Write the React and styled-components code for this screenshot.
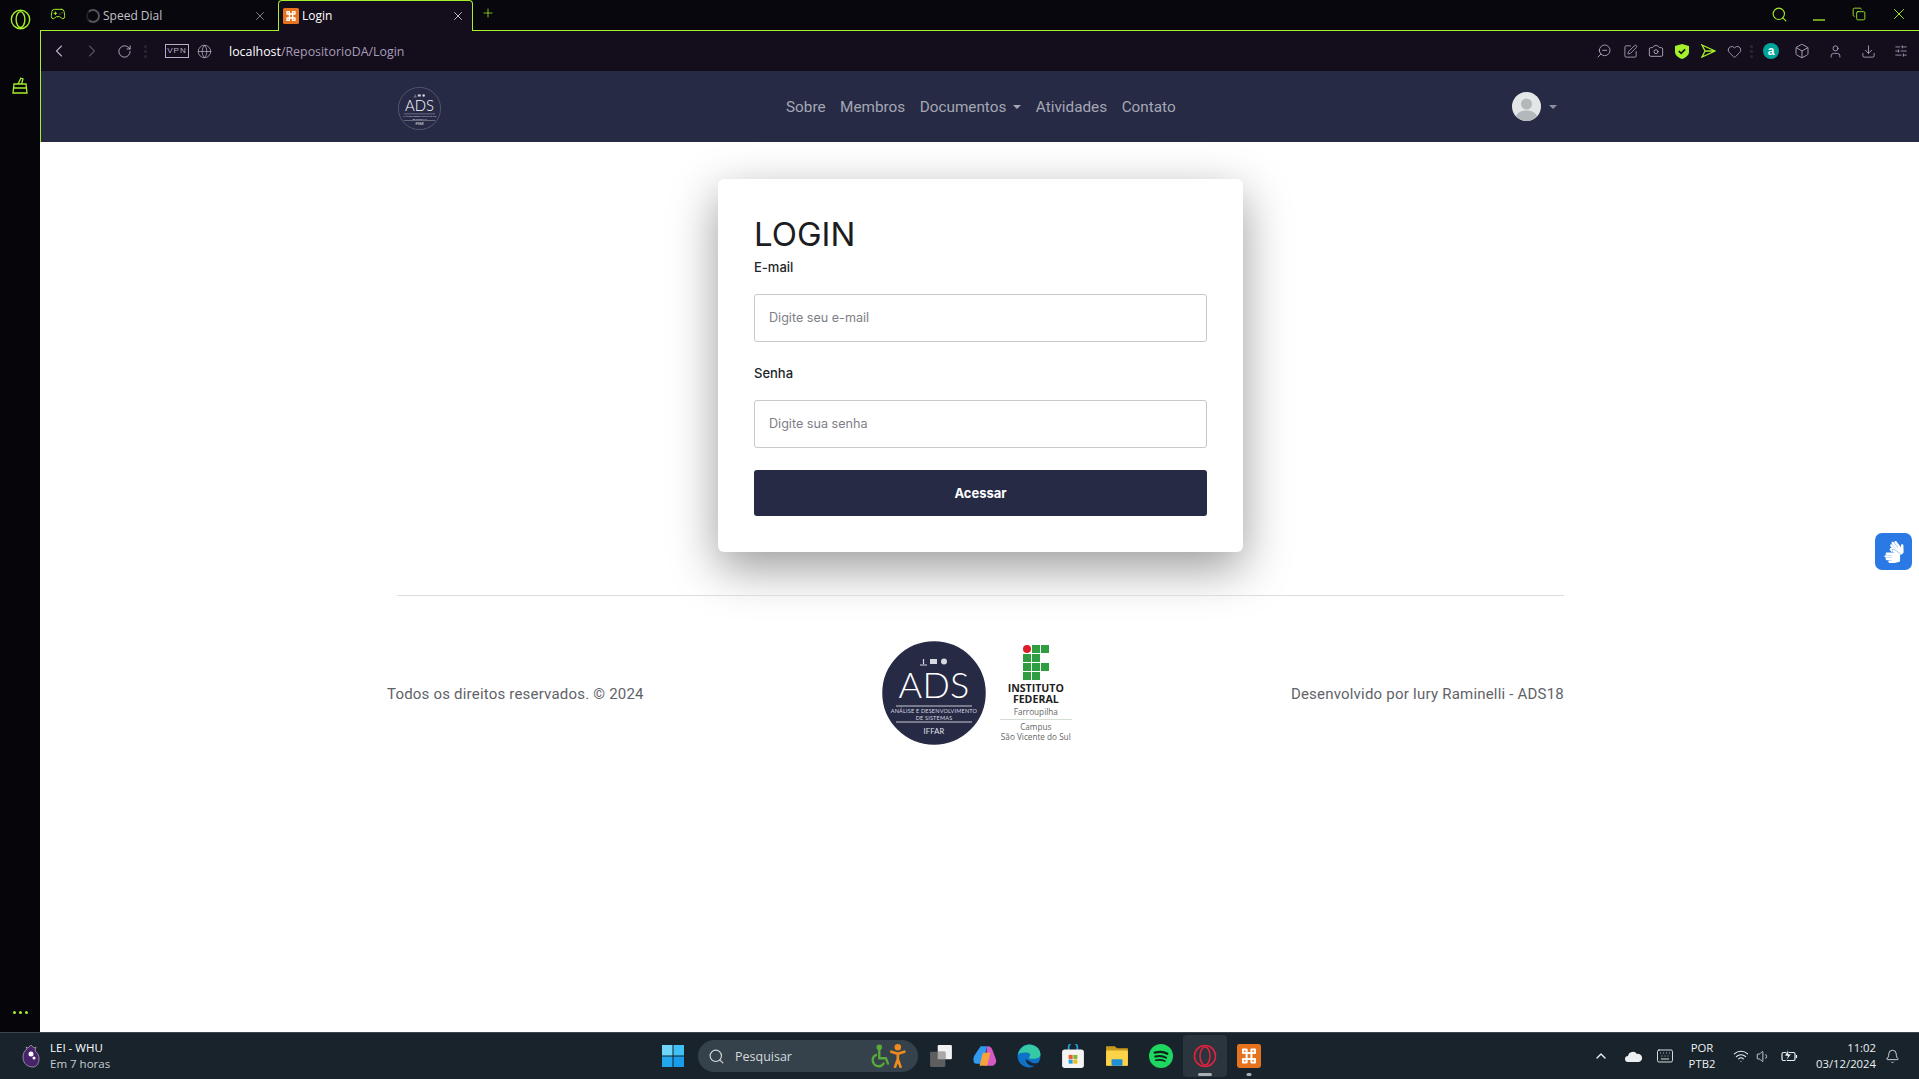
import React from 'react';
import styled, {createGlobalStyle} from 'styled-components';
import {FaSignLanguage} from 'react-icons/fa';
import {
    ChevronLeft, ChevronRight, RotateCw, Globe, ZoomOut, SquarePen, Camera, Heart, Box, User, Download,
    SlidersHorizontal, Search, Copy, X, Plus, Gamepad2, Bell, Wifi, Volume1, ChevronUp, Keyboard
} from 'lucide-react';

const GREEN = '#a4f02a';
const NAVY = '#262a45';
const LILAC = '#b9aec9';

const GlobalStyle = createGlobalStyle`
    html, body { margin: 0; padding: 0; height: 100%; background: #fff; overflow: hidden; }
    * { box-sizing: border-box; }
    #root { height: 1079px; font-family: Inter, "Liberation Sans", sans-serif; }
`;

const Screen = styled.div`
    position: relative;
    height: 1079px;
    display: flex;
    flex-direction: column;
`;

const Desktop = styled.div`
    flex: 1;
    min-height: 0;
    display: flex;
`;

const SideBar = styled.aside`
    width: 40px;
    background: #060509;
    display: flex;
    flex-direction: column;
    align-items: center;
    color: ${GREEN};
    padding: 9px 0 18px;
`;

const SideBasket = styled.div`
    margin-top: 44px;
    height: 22px;
    display: flex;
    align-items: center;
`;

const SideDots = styled.div`
    margin-top: auto;
    display: flex;
    gap: 3px;
`;

const Dot = styled.span`
    width: 3px;
    height: 3px;
    border-radius: 50%;
    background: ${p => p.$color || GREEN};
`;

const Browser = styled.div`
    flex: 1;
    min-width: 0;
    display: flex;
    flex-direction: column;
`;

const TabStrip = styled.div`
    height: 31px;
    background: #08070d;
    border-bottom: 1px solid ${GREEN};
    display: flex;
    align-items: flex-start;
    padding-left: 10px;
`;

const WorkspaceIcon = styled.div`
    width: 25px;
    height: 30px;
    display: flex;
    align-items: center;
    color: ${GREEN};
    padding-bottom: 2px;
`;

const Tab = styled.div`
    height: 31px;
    display: flex;
    align-items: center;
    font-size: 12px;
    width: ${p => p.$active ? '195px' : '203px'};
    padding: ${p => p.$active ? '0 5px 0 4px' : '0 11px 0 11px'};
    color: ${p => p.$active ? '#fff' : '#c4c0c9'};
    background: ${p => p.$active ? '#140d1c' : 'transparent'};
    border: ${p => p.$active ? `1px solid ${GREEN}` : 'none'};
    border-bottom: none;
    border-radius: 4px 4px 0 0;
    margin-bottom: -1px;
    position: relative;
    font-family: "Open Sans", sans-serif;
`;

const TabTitle = styled.span`
    flex: 1;
    margin-left: 3px;
    padding-bottom: 1px;
`;

const Spinner = styled.span`
    width: 14px;
    height: 14px;
    border-radius: 50%;
    border: 2px solid #55525c;
    border-left-color: #22202a;
`;

const TabClose = styled.span`
    display: flex;
    color: ${p => p.$active ? '#eee' : '#a8a4ae'};
    margin-right: ${p => p.$active ? '2px' : '0'};
`;

const NewTab = styled.div`
    display: flex;
    margin: 6px 0 0 8px;
    color: ${GREEN};
`;

const WindowButtons = styled.div`
    margin-left: auto;
    display: flex;
    gap: 18px;
    padding: 5px 9px 0 0;
    color: ${GREEN};
`;

const WindowButton = styled.span`
    width: 22px;
    height: 18px;
    display: flex;
    align-items: center;
    justify-content: center;
`;

const AddressBar = styled.div`
    height: 40px;
    background: #140d1c;
    border-left: 1px solid ${GREEN};
    display: flex;
    align-items: center;
    color: ${LILAC};
    padding-left: 1px;
`;

const ToolButton = styled.span`
    width: ${p => p.$w || 33}px;
    display: flex;
    justify-content: center;
    align-items: center;
    color: ${p => p.$color || LILAC};
`;

const ToolDots = styled.span`
    display: flex;
    flex-direction: column;
    gap: 2px;
    width: ${p => p.$w || 8}px;
    align-items: center;
`;

const Vpn = styled.span`
    width: 24px;
    height: 14px;
    border: 1px solid ${LILAC};
    font: 8px/12px "Liberation Sans", sans-serif;
    letter-spacing: 1px;
    text-align: center;
    margin: 0 3px 0 16px;
`;

const Url = styled.div`
    margin-left: 13px;
    font-size: 12.4px;
    font-family: "Open Sans", sans-serif;
    color: #a79db8;
    strong { color: #fff; font-weight: 400; }
`;

const ToolRight = styled.div`
    margin-left: auto;
    display: flex;
    align-items: center;
`;

const Page = styled.main`
    flex: 1;
    min-height: 0;
    background: #fff;
`;

const NavBar = styled.nav`
    height: 71px;
    background: ${NAVY};
    border-left: 1px solid ${GREEN};
    display: flex;
    align-items: center;
    padding: 0 362px 0 357px;
`;

const NavLogo = styled.div`
    display: flex;
    margin-top: 3px;
`;

const NavLinks = styled.div`
    display: flex;
    gap: 14.5px;
    margin-left: 345px;
    font-family: Roboto, sans-serif;
    font-size: 15.3px;
    color: #a5a7b3;
`;

const NavLink = styled.span`
    display: flex;
    align-items: center;
`;

const Caret = styled.span`
    width: 0;
    height: 0;
    border-top: 4px solid ${p => p.$color || '#a5a7b3'};
    border-left: 4px solid transparent;
    border-right: 4px solid transparent;
    margin-left: ${p => p.$gap || 7}px;
`;

const NavUser = styled.div`
    margin-left: auto;
    display: flex;
    align-items: center;
`;

const Container = styled.div`
    width: 1187px;
    margin-left: 347px;
`;

const Card = styled.section`
    width: 525px;
    height: 373px;
    margin: 37px 0 0 331px;
    padding: 34px 36px;
    background: #fff;
    border-radius: 6px;
    box-shadow: 0 16px 48px rgba(0, 0, 0, 0.4);
`;

const Title = styled.h1`
    margin: 0 0 4px;
    font-size: 33px;
    line-height: 42px;
    font-weight: 400;
    color: #1b1d22;
`;

const Label = styled.label`
    display: block;
    font-size: 13px;
    line-height: 16px;
    font-weight: 500;
    color: #212529;
    margin-top: ${p => p.$top || 0}px;
    margin-bottom: 19px;
`;

const Input = styled.input`
    display: block;
    width: 100%;
    height: 48px;
    border: 1px solid #c9c9c9;
    border-radius: 3px;
    padding: 0 14px 2px;
    font: 12.6px Inter, sans-serif;
    outline: none;
    &::placeholder { color: #7d8186; opacity: 1; }
`;

const Submit = styled.button`
    display: block;
    width: 100%;
    height: 46px;
    margin-top: 22px;
    padding-bottom: 2px;
    border: none;
    border-radius: 3px;
    background: ${NAVY};
    color: #fff;
    font: 700 13px Inter, sans-serif;
`;

const Rule = styled.hr`
    margin: 43px 10px 0 10px;
    border: none;
    border-top: 1px solid #dcdcdc;
`;

const Footer = styled.footer`
    display: flex;
    align-items: center;
    justify-content: space-between;
    margin-top: 45px;
    height: 104px;
    font-family: Roboto, sans-serif;
    font-size: 15px;
    letter-spacing: 0.2px;
    color: #5f6368;
    padding-right: 10px;
    & > span { margin-top: 2px; }
`;

const FooterLogos = styled.div`
    display: flex;
    align-items: center;
    gap: 14px;
    margin-left: 19px;
`;

const Campus = styled.div`
    width: 72px;
    display: flex;
    flex-direction: column;
    align-items: center;
    letter-spacing: 0;
`;

const IfGrid = styled.div`
    display: grid;
    grid-template-columns: repeat(3, 8px);
    grid-auto-rows: 8px;
    gap: 1px;
    margin-bottom: 3px;
`;

const IfCell = styled.span`
    background: ${p => p.$red ? '#d8202a' : p.$empty ? 'transparent' : '#2f9e41'};
    border-radius: ${p => p.$red ? '50%' : '0'};
`;

const IfName = styled.div`
    font: 700 10.6px/11px "Open Sans", sans-serif;
    text-align: center;
    color: #222;
    margin-bottom: 2px;
`;

const IfCity = styled.div`
    font: 8.2px/10px "Open Sans", sans-serif;
    color: #666;
    text-align: center;
    width: 100%;
    border-bottom: ${p => p.$line ? '1px solid #d3dfd3' : 'none'};
    padding-bottom: ${p => p.$line ? '2px' : '0'};
    margin-bottom: ${p => p.$line ? '2px' : '0'};
    white-space: nowrap;
`;

const SignWidget = styled.div`
    position: absolute;
    left: 1875px;
    top: 533px;
    width: 37px;
    height: 37px;
    border-radius: 7px;
    background: #2a79e4;
    color: #fff;
    display: flex;
    align-items: center;
    justify-content: center;
`;

const TaskBar = styled.footer`
    height: 47px;
    background: #18232b;
    border-top: 1px solid #3c4549;
    display: flex;
    align-items: center;
    color: #fff;
    position: relative;
    font-family: "Open Sans", sans-serif;
`;

const Weather = styled.div`
    display: flex;
    align-items: center;
    gap: 10px;
    padding-left: 22px;
    width: 661px;
`;

const WeatherText = styled.div`
    font-size: 11.5px;
    line-height: 16px;
    span { display: block; color: #c8ced2; }
`;

const Pinned = styled.div`
    display: flex;
    align-items: center;
`;

const SearchPill = styled.div`
    width: 220px;
    height: 32px;
    margin: 0 1px 0 13px;
    border-radius: 16px;
    background: #35424b;
    display: flex;
    align-items: center;
    padding: 0 11px 0 10px;
    font-size: 12.5px;
    color: #d5d9dc;
    gap: 10px;
    span { flex: 1; }
`;

const PinnedIcon = styled.div`
    width: 44px;
    height: 42px;
    display: flex;
    align-items: center;
    justify-content: center;
    position: relative;
    border-radius: 4px;
    background: ${p => p.$active ? '#2a353d' : 'transparent'};
    svg { width: 24px; height: 24px; }
`;

const RunMark = styled.span`
    position: absolute;
    bottom: 1px;
    left: 50%;
    transform: translateX(-50%);
    width: ${p => p.$wide ? 14 : 5}px;
    height: 3px;
    border-radius: 2px;
    background: #aab0b4;
`;

const Tray = styled.div`
    margin-left: auto;
    display: flex;
    align-items: center;
    padding-right: 16px;
    font-size: 11.3px;
    color: #eef0f1;
`;

const TrayIcon = styled.span`
    width: ${p => p.$w || 26}px;
    display: flex;
    justify-content: center;
`;

const TrayLang = styled.div`
    width: 44px;
    text-align: center;
    line-height: 16px;
    margin: 0 6px 0 2px;
`;

const Clock = styled.div`
    width: 70px;
    text-align: right;
    line-height: 16px;
    margin: 0 5px 0 2px;
`;

const OperaMark = ({size, color}) => (
    <svg width={size} height={size} viewBox="0 0 24 24" fill="none" stroke={color} strokeWidth="1.6">
        <circle cx="12" cy="12" r="10.5"/>
        <ellipse cx="12" cy="12" rx="5" ry="9"/>
    </svg>
);

const BasketIcon = () => (
    <svg width="16" height="17" viewBox="0 0 16 17" fill="none" stroke={GREEN} strokeWidth="1.3">
        <path d="M2 7h12l1 9H1zM1.6 11h12.8M6 7l3-6M8 1l3 1-1.5 5"/>
    </svg>
);

const XamppIcon = ({size}) => (
    <svg width={size} height={size} viewBox="0 0 20 20" fill="none" stroke="#fff" strokeWidth="1.7" strokeLinejoin="round">
        <rect width="20" height="20" rx="2" fill="#e8731f" stroke="none"/>
        <path d="M5 4.500h3v3H5zM12 4.500h3v3h-3zM5 12.500h3v3H5zM12 12.500h3v3h-3zM8 7.500h4v5H8z"/>
    </svg>
);

const MinimizeIcon = () => (
    <svg width="16" height="18" viewBox="0 0 16 18" stroke={GREEN} strokeWidth="1.3">
        <path d="M2 15h12"/>
    </svg>
);

const SendIcon = () => (
    <svg width="15" height="14" viewBox="0 0 15 14" fill="none" stroke={GREEN} strokeWidth="1.3">
        <path d="M1 1l13 6-13 6 3-6zM4 7h10"/>
    </svg>
);

const ShieldIcon = () => (
    <svg width="14" height="15" viewBox="0 0 14 15">
        <path d="M7 0l7 2v6c0 3-3 5.500-7 7-4-1.500-7-4-7-7V2z" fill={GREEN}/>
        <path d="M3.800 7l2.300 2.300 4-4" fill="none" stroke="#140d1c" strokeWidth="1.700"/>
    </svg>
);

const AvastBadge = () => (
    <svg width="16" height="16" viewBox="0 0 16 16">
        <circle cx="8" cy="8" r="8" fill="#00a499"/>
        <text x="8" y="12" textAnchor="middle" fontSize="12" fontWeight="700" fontFamily="Liberation Sans" fill="#fff">a</text>
    </svg>
);

const AdsBadge = ({size, fill, ring}) => (
    <svg width={size} height={size} viewBox="0 0 104 104" fontFamily="Lato, sans-serif">
        <circle cx="52" cy="52" r="51" fill={fill} stroke={ring} strokeWidth="1.500"/>
        <path d="M38 24h7M41.500 18v5" stroke="#d8d9e0" strokeWidth="1.200"/>
        <rect x="48" y="18" width="7" height="5" fill="#d8d9e0"/>
        <circle cx="62" cy="20.500" r="3" fill="#d8d9e0"/>
        <text x="52" y="57" textAnchor="middle" fontSize="36" fontWeight="300" fill="#fff">ADS</text>
        <path d="M14 65h76M14 81h76" stroke="#c8c9d2" strokeWidth="1"/>
        <text x="52" y="72" textAnchor="middle" fontSize="5.500" fill="#d8d9e0">ANÁLISE E DESENVOLVIMENTO</text>
        <text x="52" y="79" textAnchor="middle" fontSize="5.500" fill="#d8d9e0">DE SISTEMAS</text>
        <text x="52" y="93" textAnchor="middle" fontSize="7.500" fill="#e4e5ea">IFFAR</text>
    </svg>
);

const AvatarIcon = () => (
    <svg width="29" height="29" viewBox="0 0 29 29">
        <circle cx="14.500" cy="14.500" r="14.500" fill="#e4e6e7"/>
        <circle cx="14.500" cy="12" r="5.500" fill="#b3b8bb"/>
        <path d="M4 24c2-4 6-5.500 10.500-5.500S23 20 25 24c-2.500 3-6 5-10.500 5S6.500 27 4 24z" fill="#b3b8bb"/>
    </svg>
);

const WindowsIcon = () => (
    <svg width="24" height="24" viewBox="0 0 24 24" fill="#3fc1f5">
        <path d="M1 1h10.500v10.500H1z" fill="#6fd6fb"/><path d="M12.500 1H23v10.500H12.500z"/>
        <path d="M1 12.500h10.500V23H1z" fill="#22a7ee"/><path d="M12.500 12.500H23V23H12.500z" fill="#1a9aea"/>
    </svg>
);

const TaskViewIcon = () => (
    <svg viewBox="0 0 22 22">
        <rect x="8" y="1" width="13" height="13" rx="1" fill="#f2f2f2"/>
        <rect x="1" y="7" width="14" height="14" rx="1" fill="#5e5e5e"/>
        <rect x="8" y="7" width="7" height="7" fill="#a9a9a9"/>
    </svg>
);

const CopilotIcon = () => (
    <svg viewBox="0 0 22 22">
        <path d="M7 2h6l-4 16H3C0 18 0 14 1 11z" fill="#2f9af0"/>
        <path d="M13 2c3 0 4 1 5 4l3 8c1 3-1 6-4 6h-6z" fill="#d65ac4"/>
        <path d="M9 8h7l-3 12H6z" fill="#f6a33b"/>
    </svg>
);

const EdgeIcon = () => (
    <svg viewBox="0 0 22 22">
        <circle cx="11" cy="11" r="10.500" fill="#0f72c9"/>
        <path d="M1 10C2 4 7 .5 11 .5c6 0 10.500 4 10.500 9 0 3-3 4-5.500 4h-4c-1 0-1-1-.5-2 1-1 1-3-1.500-3.500C6 7.500 2 8 1 10z" fill="#35c9a5"/>
        <path d="M8 14c0 4 4 7 9 6 2-.5 3-2 4-3-3 1-7 1-9-1z" fill="#18263a"/>
    </svg>
);

const StoreIcon = () => (
    <svg viewBox="0 0 20 22">
        <path d="M6 6V3a4 4 0 0 1 8 0v3" fill="none" stroke="#1f9fe0" strokeWidth="1.600"/>
        <rect y="5" width="20" height="17" rx="2.500" fill="#f4f4f4"/>
        <path d="M6 10h3.700v3.700H6z" fill="#ee5a2a"/><path d="M10.300 10H14v3.700h-3.700z" fill="#7db92f"/>
        <path d="M6 14.300h3.700V18H6z" fill="#1f9fe0"/><path d="M10.300 14.300H14V18h-3.700z" fill="#f7b90c"/>
    </svg>
);

const FolderIcon = () => (
    <svg viewBox="0 0 22 22">
        <path d="M1 2h8l2 2h10v16H1z" fill="#c99a1b"/>
        <rect x="1" y="6" width="20" height="14" rx="1" fill="#fbd248"/>
        <rect x="6" y="14" width="10" height="6" rx="1" fill="#1d8fd6"/>
    </svg>
);

const SpotifyIcon = () => (
    <svg viewBox="0 0 21 21" fill="none" stroke="#12221a" strokeLinecap="round">
        <circle cx="10.500" cy="10.500" r="10.500" fill="#1ed760" stroke="none"/>
        <path d="M5 7.500c4-1 8-1 11 1" strokeWidth="2"/>
        <path d="M5.500 11c3.500-.8 7-.5 9.500 1" strokeWidth="1.700"/>
        <path d="M6 14.200c3-.6 5.500-.4 8 .8" strokeWidth="1.400"/>
    </svg>
);

const AccessIcons = () => (
    <svg width="38" height="24" viewBox="0 0 32 22" fill="none" strokeLinecap="round">
        <g stroke="#5aa83a" strokeWidth="2.200">
            <circle cx="8" cy="3" r="1.500" fill="#5aa83a"/>
            <path d="M8 6v7h6l2 5M5 10a5.500 5.500 0 1 0 7 8"/>
        </g>
        <g stroke="#ee8a1e" strokeWidth="2.400">
            <circle cx="25" cy="3" r="1.800" fill="#ee8a1e"/>
            <path d="M19 7l6 2 6-2M25 9v5M25 14l-2.500 7M25 14l2.500 7"/>
        </g>
    </svg>
);

const LeagueIcon = () => (
    <svg width="18" height="24" viewBox="0 0 18 24">
        <path d="M4 3l2 1 3-3 3 3 2-1-1 4c3 2 4 5 4 8 0 5-3 8-6 8-5 0-10-3-10-10 0-3 1-6 4-8z" fill="#47236b" stroke="#cfc6d8" strokeWidth="0.600"/>
        <circle cx="9" cy="10" r="2.500" fill="#fff"/>
        <circle cx="12" cy="14" r="1.500" fill="#fff"/>
    </svg>
);

const CloudIcon = () => (
    <svg width="17" height="11" viewBox="0 0 17 11">
        <path d="M3 11a3 3 0 0 1 0-6 5 5 0 0 1 9-2 4 4 0 0 1 2 8z" fill="#eceeef"/>
    </svg>
);

const BatteryIcon = () => (
    <svg width="17" height="14" viewBox="0 0 17 14" fill="none" stroke="#eef0f1" strokeWidth="1.200">
        <rect x="1" y="3.500" width="13" height="8" rx="1.500"/>
        <path d="M15.500 6v3"/>
        <path d="M7 0.500L3.500 7h3l-1.500 5 5.500-7H7.500z" fill="#eef0f1" stroke="#18232b" strokeWidth="0.700"/>
    </svg>
);

const IF_CELLS = ['red', '', '', '', '', 'empty', '', '', '', '', '', 'empty'];

export default function App() {
    return (
        <Screen>
            <GlobalStyle/>
            <Desktop>
                <SideBar>
                    <OperaMark size={21} color={GREEN}/>
                    <SideBasket><BasketIcon/></SideBasket>
                    <SideDots><Dot/><Dot/><Dot/></SideDots>
                </SideBar>
                <Browser>
                    <TabStrip>
                        <WorkspaceIcon><Gamepad2 size={16} strokeWidth={1.5}/></WorkspaceIcon>
                        <Tab>
                            <Spinner/>
                            <TabTitle>Speed Dial</TabTitle>
                            <TabClose><X size={14} strokeWidth={1.3}/></TabClose>
                        </Tab>
                        <Tab $active>
                            <XamppIcon size={16}/>
                            <TabTitle>Login</TabTitle>
                            <TabClose $active><X size={14} strokeWidth={1.3}/></TabClose>
                        </Tab>
                        <NewTab><Plus size={14} strokeWidth={1.3}/></NewTab>
                        <WindowButtons>
                            <WindowButton><Search size={17} strokeWidth={1.5}/></WindowButton>
                            <WindowButton><MinimizeIcon/></WindowButton>
                            <WindowButton><Copy size={14} strokeWidth={1.5}/></WindowButton>
                            <WindowButton><X size={18} strokeWidth={1.3}/></WindowButton>
                        </WindowButtons>
                    </TabStrip>
                    <AddressBar>
                        <ToolButton><ChevronLeft size={20} strokeWidth={1.3}/></ToolButton>
                        <ToolButton $color="#55505f"><ChevronRight size={20} strokeWidth={1.3}/></ToolButton>
                        <ToolButton><RotateCw size={15} strokeWidth={1.5}/></ToolButton>
                        <ToolDots><Dot $color="#2c2636"/><Dot $color="#2c2636"/><Dot $color="#2c2636"/></ToolDots>
                        <Vpn>VPN</Vpn>
                        <ToolButton $w={24}><Globe size={15} strokeWidth={1.2}/></ToolButton>
                        <Url><strong>localhost</strong>/RepositorioDA/Login</Url>
                        <ToolRight>
                            <ToolButton $w={26}><ZoomOut size={16} strokeWidth={1.3} style={{transform: 'scaleX(-1)'}}/></ToolButton>
                            <ToolButton $w={26}><SquarePen size={15} strokeWidth={1.3}/></ToolButton>
                            <ToolButton $w={26}><Camera size={16} strokeWidth={1.3}/></ToolButton>
                            <ToolButton $w={26}><ShieldIcon/></ToolButton>
                            <ToolButton $w={26}><SendIcon/></ToolButton>
                            <ToolButton $w={26}><Heart size={15} strokeWidth={1.3}/></ToolButton>
                            <ToolDots><Dot $color="#2c2636"/><Dot $color="#2c2636"/><Dot $color="#2c2636"/></ToolDots>
                            <ToolButton $w={32}><AvastBadge/></ToolButton>
                            <ToolButton $w={30}><Box size={16} strokeWidth={1.3}/></ToolButton>
                            <ToolButton $w={36}><User size={15} strokeWidth={1.3}/></ToolButton>
                            <ToolButton $w={30}><Download size={15} strokeWidth={1.3}/></ToolButton>
                            <ToolButton $w={36}><SlidersHorizontal size={14} strokeWidth={1.3}/></ToolButton>
                        </ToolRight>
                    </AddressBar>
                    <Page>
                        <NavBar>
                            <NavLogo><AdsBadge size={43} fill={NAVY} ring="#6d7085"/></NavLogo>
                            <NavLinks>
                                <NavLink>Sobre</NavLink>
                                <NavLink>Membros</NavLink>
                                <NavLink>Documentos<Caret/></NavLink>
                                <NavLink>Atividades</NavLink>
                                <NavLink>Contato</NavLink>
                            </NavLinks>
                            <NavUser>
                                <AvatarIcon/>
                                <Caret $gap={8} $color="#8e909d"/>
                            </NavUser>
                        </NavBar>
                        <Container>
                            <Card>
                                <Title>LOGIN</Title>
                                <Label htmlFor="email">E-mail</Label>
                                <Input id="email" placeholder="Digite seu e-mail"/>
                                <Label htmlFor="senha" $top={23}>Senha</Label>
                                <Input id="senha" placeholder="Digite sua senha"/>
                                <Submit>Acessar</Submit>
                            </Card>
                            <Rule/>
                            <Footer>
                                <span>Todos os direitos reservados. © 2024</span>
                                <FooterLogos>
                                    <AdsBadge size={104} fill={NAVY} ring={NAVY}/>
                                    <Campus>
                                        <IfGrid>
                                            {IF_CELLS.map((c, i) => <IfCell key={i} $red={c === 'red'} $empty={c === 'empty'}/>)}
                                        </IfGrid>
                                        <IfName>INSTITUTO<br/>FEDERAL</IfName>
                                        <IfCity $line>Farroupilha</IfCity>
                                        <IfCity>Campus</IfCity>
                                        <IfCity>São Vicente do Sul</IfCity>
                                    </Campus>
                                </FooterLogos>
                                <span>Desenvolvido por Iury Raminelli - ADS18</span>
                            </Footer>
                        </Container>
                    </Page>
                </Browser>
            </Desktop>
            <SignWidget><FaSignLanguage size={22}/></SignWidget>
            <TaskBar>
                <Weather>
                    <LeagueIcon/>
                    <WeatherText>LEI - WHU<span>Em 7 horas</span></WeatherText>
                </Weather>
                <Pinned>
                    <WindowsIcon/>
                    <SearchPill>
                        <Search size={17} strokeWidth={1.6}/>
                        <span>Pesquisar</span>
                        <AccessIcons/>
                    </SearchPill>
                    <PinnedIcon><TaskViewIcon/></PinnedIcon>
                    <PinnedIcon><CopilotIcon/></PinnedIcon>
                    <PinnedIcon><EdgeIcon/></PinnedIcon>
                    <PinnedIcon><StoreIcon/></PinnedIcon>
                    <PinnedIcon><FolderIcon/></PinnedIcon>
                    <PinnedIcon><SpotifyIcon/></PinnedIcon>
                    <PinnedIcon $active><OperaMark size={22} color="#e0213f"/><RunMark $wide/></PinnedIcon>
                    <PinnedIcon><XamppIcon size={20}/><RunMark/></PinnedIcon>
                </Pinned>
                <Tray>
                    <TrayIcon><ChevronUp size={16} strokeWidth={2}/></TrayIcon>
                    <TrayIcon $w={38}><CloudIcon/></TrayIcon>
                    <TrayIcon><Keyboard size={18} strokeWidth={1.2}/></TrayIcon>
                    <TrayLang>POR<br/>PTB2</TrayLang>
                    <TrayIcon $w={22}><Wifi size={16} strokeWidth={1.6}/></TrayIcon>
                    <TrayIcon $w={22}><Volume1 size={15} strokeWidth={1.3}/></TrayIcon>
                    <TrayIcon $w={30}><BatteryIcon/></TrayIcon>
                    <Clock>11:02<br/>03/12/2024</Clock>
                    <TrayIcon $w={22}><Bell size={15} strokeWidth={1.3}/></TrayIcon>
                </Tray>
            </TaskBar>
        </Screen>
    );
}
